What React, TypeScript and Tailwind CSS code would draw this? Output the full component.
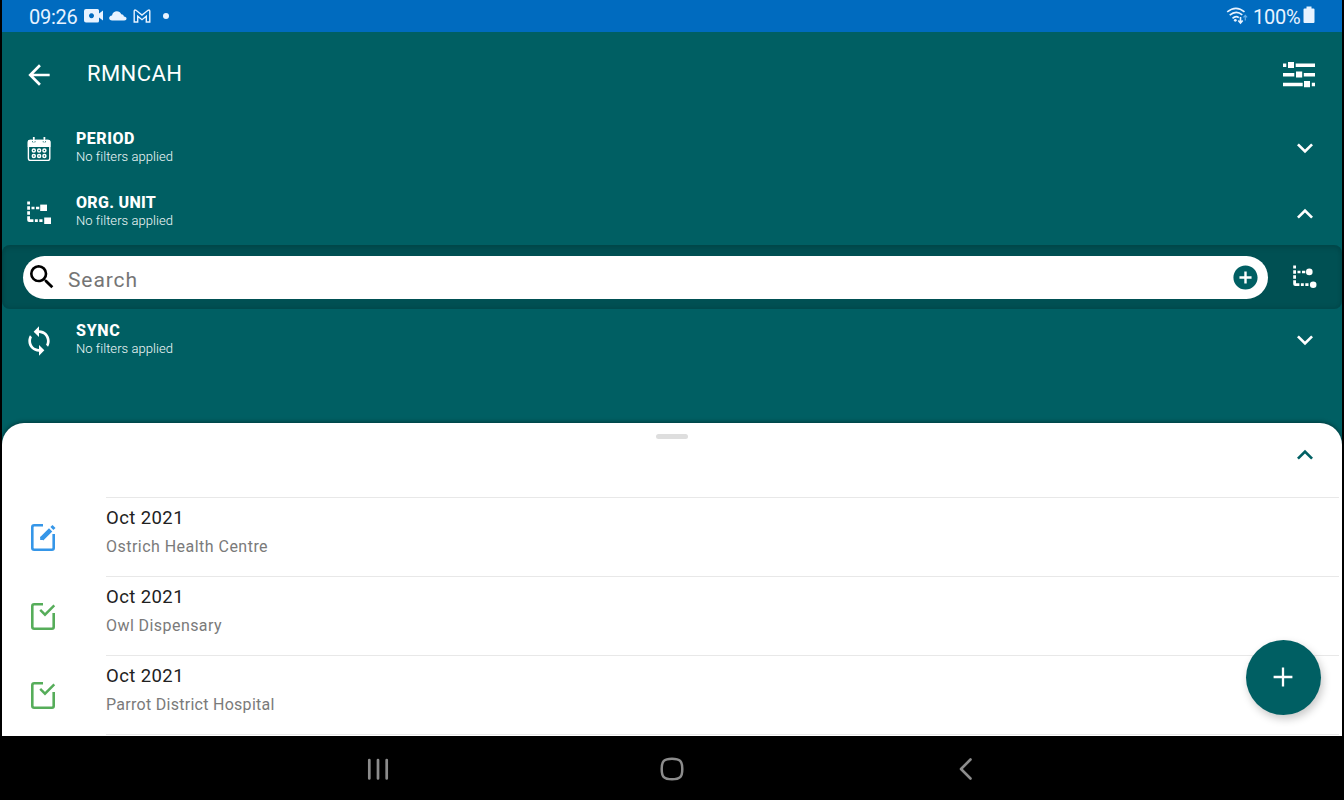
import type { ReactNode } from "react";

const SYNC =
  "M12 4V1L8 5l4 4V6c3.31 0 6 2.69 6 6 0 1.01-.25 1.97-.7 2.8l1.46 1.46C19.54 15.03 20 13.57 20 12c0-4.42-3.58-8-8-8zm0 14c-3.31 0-6-2.69-6-6 0-1.01.25-1.97.7-2.8L5.24 7.74C4.46 8.97 4 10.43 4 12c0 4.42 3.58 8 8 8v3l4-4-4-4v3z";
const BACK = "M20 11H7.83l5.59-5.59L12 4l-8 8 8 8 1.41-1.41L7.83 13H20v-2z";
const SEARCH =
  "M15.5 14h-.79l-.28-.27A6.471 6.471 0 0 0 16 9.5 6.5 6.5 0 1 0 9.5 16c1.61 0 3.09-.59 4.23-1.57l.27.28v.79l5 4.99L20.49 19l-4.99-5zm-6 0C7.01 14 5 11.99 5 9.5S7.01 5 9.5 5 14 7.01 14 9.5 11.99 14 9.5 14z";
const ADD_CIRCLE =
  "M12 2C6.48 2 2 6.48 2 12s4.48 10 10 10 10-4.48 10-10S17.52 2 12 2zm5 11h-4v4h-2v-4H7v-2h4V7h2v4h4v2z";
const DOWN = "M16.59 8.59L12 13.17 7.41 8.59 6 10l6 6 6-6z";
const UP = "M12 8l-6 6 1.41 1.41L12 10.83l4.59 4.58L18 14z";

function Icon({ d, className }: { d: string; className: string }) {
  return (
    <svg viewBox="0 0 24 24" fill="currentColor" className={className}>
      <path d={d} />
    </svg>
  );
}

function CalendarIcon() {
  return (
    <svg viewBox="0 0 28 28" className="size-7" fill="none" stroke="white">
      <rect x="3.4" y="5.4" width="21.4" height="20" rx="2.2" strokeWidth="1.4" />
      <path d="M2.700 12V6.500Q2.700 4.700 4.600 4.700H7.200V7.300H10.400V4.700H17.800V7.300H21V4.700H23.500Q25.500 4.700 25.500 6.500V12Z" fill="white" stroke="none" />
      <path d="M8.800 2V6.900M19.400 2V6.900" strokeWidth="1.800" />
      <g strokeWidth="1.500">
        <circle cx="8.800" cy="15.600" r="1.500" />
        <circle cx="14.100" cy="15.600" r="1.500" />
        <circle cx="19.400" cy="15.600" r="1.500" />
        <circle cx="8.800" cy="20.900" r="1.500" />
        <circle cx="14.100" cy="20.900" r="1.500" />
        <circle cx="19.400" cy="20.900" r="1.500" />
      </g>
    </svg>
  );
}

function TreeIcon({ round }: { round?: boolean }) {
  return (
    <svg viewBox="0 0 28 28" className="size-7 shrink-0" fill="white">
      <path d="M2.200 2.500h2.800v3H2.200zM2.200 7.200h2.800v3.500H2.200zM2.200 12.300h2.800v3.400H2.200zM6.500 7.700h3v2.600h-3zM11 7.700h3.300v2.600H11zM2.200 17.300h2.800v2.900h3.400v2.800H4.200q-2 0-2-2zM9.900 20.300h2.900v2.700H9.900zM14.300 20.300h3.200v2.700h-3.200z" />
      {round ? (
        <>
          <circle cx="18.300" cy="8.900" r="3.300" />
          <circle cx="22.200" cy="21.700" r="3.300" />
        </>
      ) : (
        <>
          <rect x="15.200" y="5.600" width="6.800" height="6.400" />
          <rect x="19.200" y="18.500" width="6.800" height="6.500" />
        </>
      )}
    </svg>
  );
}

function FilterIcon() {
  return (
    <svg viewBox="0 0 32 26" className="h-[26px] w-8" fill="white">
      <path d="M0 1.500h3.300v3.500H0zM5 0h6v6H5zM12.700 1.500H32v3.500H12.700zM0 11h11.300v3.500H0zM13 9.500h6.200v6H13zM20.800 11H32v3.500H20.800zM0 20.700h19.700v3.500H0zM21 19h6v6.300h-6zM28.800 20.700H32v3.500h-3.200z" />
    </svg>
  );
}

function StatusBar() {
  return (
    <div className="flex h-8 shrink-0 items-center bg-[#006bbf] pl-[27px] pr-[27px] text-[#e8f3ff]">
      <span className="w-[55px] text-[20px] leading-8 tracking-[-0.25px]">
        <span className="relative top-px">09:26</span>
      </span>
      <svg viewBox="0 0 88 20" className="h-5 w-[88px]" fill="currentColor">
        <path fillRule="evenodd" d="M2 3h11.500q1.500 0 1.500 1.500v3l4-3v10l-4-3v3.500q0 1.500-1.500 1.500H2q-2 0-2-2V5q0-2 2-2zm5.500 4.300a2.500 2.500 0 1 0 .01 0z" />
        <path d="M28.200 14.500c-4 0-4-4.700-.2-5 1-5.500 8-5.300 9.200-1.200 2 0 2.500 1.200 2.700 2.200 3.500.2 3.500 4 .3 4z" />
        <path d="M50.200 16V5.200Q50.200 3.500 52 4.300L58 9L64 4.300Q65.800 3.500 65.800 5.200V16H62.300V10.300L58 13.700L53.700 10.300V16Z" fill="none" stroke="currentColor" strokeWidth="1.400" />
        <circle cx="82" cy="10" r="3" />
      </svg>
      <div className="ml-auto flex items-center">
        <svg viewBox="0 0 24 20" className="mr-[3px] h-5 w-6" fill="none" stroke="currentColor" strokeWidth="1.600">
          <path d="M1.200 5.900Q10 -1.300 18.500 5.900M3.700 9.200Q10 3.600 16.300 8.800M6.500 12.300Q9.800 9.200 12.800 11.600" />
          <circle cx="9.300" cy="14.300" r="1.400" fill="currentColor" stroke="none" />
          <path d="M14.500 11v6M12.300 14.500l2.200 2.500 2.200-2.500" />
          <path d="M19.300 14.500V9.500M17.500 11.300l1.800-2 1.800 2" stroke="#67afe8" strokeWidth="1.200" />
        </svg>
        <span className="relative top-px w-[50px] text-[20px] leading-8 tracking-[-0.25px]">100%</span>
        <svg viewBox="0 0 12 18" className="mt-[-3px] h-[18px] w-3" fill="currentColor">
          <path d="M3.500 0.500h5v2H10.500q1 0 1 1v12.500q0 1-1 1H1.500q-1 0-1-1V3.500q0-1 1-1h2z" />
        </svg>
      </div>
    </div>
  );
}

function FilterRow({ icon, title, titleClass, open }: { icon: ReactNode; title: string; titleClass: string; open?: boolean }) {
  return (
    <div className="flex h-16 shrink-0 items-center pr-[21px]">
      <div className="flex w-[74px] justify-center">{icon}</div>
      <div className="-mt-[4px] flex-1 whitespace-nowrap">
        <div className={`text-[16px] font-extrabold leading-5 ${titleClass}`}>{title}</div>
        <div className="text-[13px] font-light leading-4 tracking-[0.05px] text-[#f2fafa]">No filters applied</div>
      </div>
      <Icon d={open ? UP : DOWN} className={open ? "mt-[2px] size-8" : "-mt-[2px] size-8"} />
    </div>
  );
}

function EditIcon() {
  return (
    <svg viewBox="0 0 28 30" className="h-[30px] w-7" fill="none" stroke="#3596e8" strokeWidth="2.600">
      <path d="M13 3.300H4.200Q2.300 3.300 2.300 5.200V26Q2.300 27.700 4.200 27.700H22Q23.700 27.700 23.700 26V12" />
      <path d="M11.600 16.900L20.600 7.900" strokeWidth="4.600" />
      <path d="M10.200 14.600V18H13.700Z" fill="#3596e8" stroke="none" />
      <path d="M21.900 6.600L24 4.500" strokeWidth="4.200" />
    </svg>
  );
}

function DoneIcon() {
  return (
    <svg viewBox="0 0 28 30" className="h-[30px] w-7" fill="none" stroke="#56ad5a" strokeWidth="2.600">
      <path d="M13 3.300H4.200Q2.300 3.300 2.300 5.200V26Q2.300 27.700 4.200 27.700H22Q23.700 27.700 23.700 26V12" />
      <path d="M10.200 8.900L15 13.700L24.300 4.400" strokeWidth="2.400" />
    </svg>
  );
}

const entries = [
  { period: "Oct 2021", unit: "Ostrich Health Centre", tracking: "tracking-[0.47px]", icon: <EditIcon /> },
  { period: "Oct 2021", unit: "Owl Dispensary", tracking: "tracking-[0.43px]", icon: <DoneIcon /> },
  { period: "Oct 2021", unit: "Parrot District Hospital", tracking: "tracking-[0.28px]", icon: <DoneIcon /> },
];

export default function App() {
  return (
    <div className="flex h-[800px] w-[1344px] flex-col overflow-hidden bg-black font-[Roboto,sans-serif] text-white">
      <div className="relative mx-[2px] flex h-[736px] flex-col overflow-hidden bg-[#005f63]">
        <StatusBar />
        <header className="flex h-[85px] shrink-0 items-center pl-[21px] pr-[27px]">
          <Icon d={BACK} className="size-8" />
          <h1 className="-mt-[2px] ml-[32px] flex-1 text-[22px] leading-7 tracking-[0.4px]">RMNCAH</h1>
          <FilterIcon />
        </header>

        <FilterRow icon={<CalendarIcon />} title="PERIOD" titleClass="tracking-[0.5px]" />
        <FilterRow icon={<TreeIcon />} title="ORG. UNIT" titleClass="tracking-[0.3px]" open />
        <div className="flex h-16 shrink-0 items-center rounded-lg bg-[#005053] pl-[21px] pr-[23px] shadow-[inset_0_3px_5px_rgba(0,0,0,0.12),inset_0_-2px_4px_rgba(0,0,0,0.08)]">
          <div className="flex h-[43px] w-[1245px] items-center rounded-full bg-white pl-[3px] pr-[8px]">
            <Icon d={SEARCH} className="size-8 text-black" />
            <span className="ml-[10px] mt-[6px] flex-1 text-[21px] leading-7 tracking-[0.9px] text-[#757575]">Search</span>
            <Icon d={ADD_CIRCLE} className="size-[29px] text-[#005f63]" />
          </div>
          <div className="ml-[23px]">
            <TreeIcon round />
          </div>
        </div>
        <FilterRow icon={<Icon d={SYNC} className="size-8" />} title="SYNC" titleClass="tracking-[0.7px]" />

        <main className="mt-[50px] flex-1 rounded-t-[22px] bg-white shadow-[0_-1px_4px_rgba(0,0,0,0.4)]">
          <div className="flex h-[74px] pr-[21px]">
            <div className="w-[654px]" />
            <div className="mt-[11px] h-[5px] w-8 rounded-full bg-[#dedede]" />
            <Icon d={UP} className="ml-auto mt-4 size-8 text-[#005f63]" />
          </div>
          {entries.map((e) => (
            <div key={e.unit} className="flex h-[79px]">
              <div className="w-[104px] pl-[28px] pt-[25px]">{e.icon}</div>
              <div className="mr-[3px] flex-1 border-t border-[#e8e8e8] pt-[8px]">
                <div className="text-[18.5px] leading-6 tracking-[0.42px] text-[#212121]">{e.period}</div>
                <div className={`mt-[7px] text-[16px] leading-5 text-[#7a7a7a] ${e.tracking}`}>{e.unit}</div>
              </div>
            </div>
          ))}
          <div className="ml-[104px] mr-[3px] border-t border-[#e8e8e8]" />
        </main>

        <button className="absolute left-[1244px] top-[640px] flex size-[75px] items-center justify-center rounded-full bg-[#005f63] shadow-[2px_4px_8px_rgba(0,0,0,0.22)]">
          <svg viewBox="0 0 20 20" className="-mt-px mr-px size-5" stroke="white" strokeWidth="2.300">
            <path d="M10 .6V19.400M.6 10H19.400" />
          </svg>
        </button>
      </div>

      <nav className="flex h-16 items-center justify-between pl-[366px] pr-[366px]">
        <svg viewBox="0 0 24 24" className="mt-px size-6" stroke="#8c8c8c" strokeWidth="2.700" strokeLinecap="round">
          <path d="M3.300 3V21.500M12 3V21.500M20.700 3V21.500" />
        </svg>
        <svg viewBox="0 0 24 24" className="mt-[2px] size-6" fill="none" stroke="#8c8c8c" strokeWidth="2.500">
          <path d="M12 1.700C20 1.700 22.300 4 22.300 12S20 22.300 12 22.300 1.700 20 1.700 12 4 1.700 12 1.700Z" />
        </svg>
        <svg viewBox="0 0 24 24" className="mt-[2px] size-6" fill="none" stroke="#8c8c8c" strokeWidth="2.600" strokeLinecap="round" strokeLinejoin="round">
          <path d="M16.500 2.500L7 12L16.500 21.500" />
        </svg>
      </nav>
    </div>
  );
}
